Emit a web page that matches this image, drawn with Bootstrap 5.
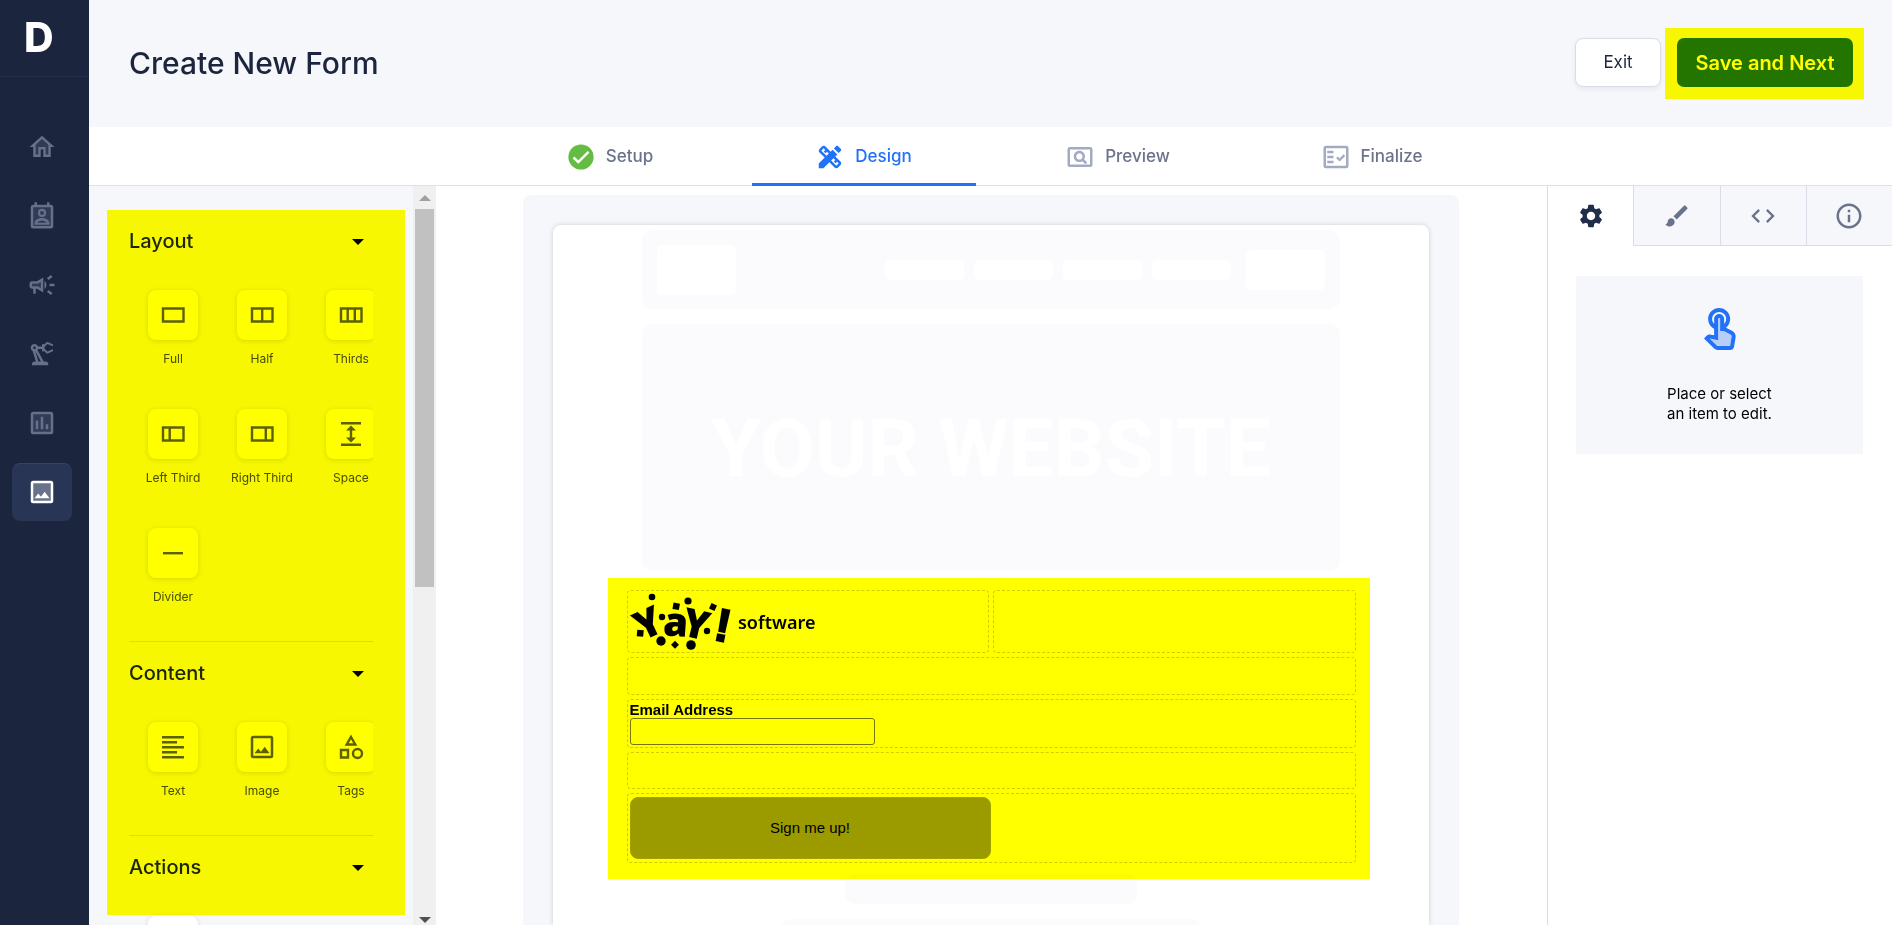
<!DOCTYPE html>
<html lang="en">
<head>
<meta charset="utf-8">
<meta name="viewport" content="width=device-width, initial-scale=1">
<title>Create New Form</title>
<link href="https://cdn.jsdelivr.net/npm/bootstrap@5.3.0/dist/css/bootstrap.min.css" rel="stylesheet">
<style>
:root{--ink:#1b253d;--mist:#f6f7fb;--line:#dcdce9;--slate:#6b738b;--blue:#2172f6}
body{font-family:Inter,"Liberation Sans",sans-serif;color:var(--ink);background:#fff}
svg{display:block;flex:none;fill:currentColor}
.ic{width:30px;height:30px}
.ic-s{width:28px;height:28px}
.ic-l{width:48px;height:48px}
/* dark rail */
.rail{width:89px;background:var(--ink)}
.brand{height:77px;border-bottom:1px solid #242f4b;color:#fff;font:800 41px/74px Inter,sans-serif;padding-left:24px;text-decoration:none}
.rail-nav{padding:41px 17px 0 12px;gap:11px}
.rail-link{height:58px;border-radius:8px;color:#66708a;border:1px solid transparent}
.rail-link.on{background:#283555;border-top-color:#36425f;color:#fff}
/* top */
.top{height:127px;background:var(--mist);padding:0 39px 2px 40px}
.top h1{font-size:30px;line-height:36px;font-weight:500}
.btn-exit{width:86px;height:49px;background:#fff;border:1px solid var(--line);border-radius:8px;font-size:17px;color:var(--ink);box-shadow:0 2px 5px #1b253d14}
.btn-save{width:176px;height:49px;border-radius:7px;background:#237525;color:#fff;font-size:20px;font-weight:600;padding:0}
.marker{position:absolute;background:#ff0;mix-blend-mode:multiply;pointer-events:none}
.marker-save{inset:-10px -11px -12px -12px}
.marker-tools{inset:24px 8px 10px 18px}
.marker-form{inset:-12px -14px -16px -19px}
/* steps */
.steps{height:59px;gap:30px;border-bottom:1px solid #dbe1ea}
.step{width:224px;height:59px;gap:10px;font-size:17px;font-weight:500;color:var(--slate);text-decoration:none;border-bottom:3px solid transparent;padding-top:3px}
.step svg{color:#a3abc3}
.step.on,.step.on svg{color:var(--blue)}
.step.on{border-color:var(--blue)}
/* left tools */
.tools{width:324px;background:var(--mist)}
.tools-in{padding:39px 40px 0 40px}
.sect + .sect{border-top:1px solid #dcdfe3;margin-top:14px;padding-top:15px}
.sect-head{height:30px;margin-bottom:15px;padding:1px 9px 0 0;border:0;background:none;font-size:20px;font-weight:500;color:var(--ink)}
.caret{border:6px solid transparent;border-top-color:#000;border-bottom:0;margin-top:2px}
.tiles{display:grid;grid-template-columns:repeat(3,89px);overflow:hidden}
.tile{height:119px;padding:20px 1px 0 0;border:0;background:none;font-size:12px;line-height:16px;color:#484e60}
.tile-box{width:50px;height:50px;border-radius:8px;background:#fff;margin-bottom:11px;box-shadow:0 1px 5px #1b253d24;color:#5c6178}
.bar{width:23px;background:#f0f0f0;padding:9px 2px 2px}
.thumb{height:378px;width:19px;background:#c1c1c1;margin-top:8px}
.up,.dn{border:6px solid transparent;width:12px}
.up{border-bottom-color:#a0a0a0;border-top:0}
.dn{border-top-color:#505050;border-bottom:0}
/* canvas */
.board{padding-right:1px}
.stage{width:936px;max-width:100%;margin-top:9px;padding:30px 30px 0;background:var(--mist);border-radius:8px 8px 0 0}
.sheet{background:#fff;border-radius:8px 8px 0 0;padding-top:5px;box-shadow:0 0 5px #1b253d30}
.ghost{background:#fbfbfd;border-radius:10px}
.ghost-w{width:698px}
.ghost i{background:#fff;border-radius:5px;width:79px}
.hero{height:247px;font:700 80px/90px Roboto,sans-serif;color:#fff;padding-top:2px;white-space:nowrap}
.form-zone{width:729px;margin-top:19px;gap:4px;font-family:"Liberation Sans",Arial,sans-serif;font-size:15px;color:#000}
.cell{border:1px dashed #cfcfcf;border-radius:4px;padding:2px}
.cell label{font-weight:700;line-height:16px}
.mail{width:245px;height:27px;border:1px solid #767676;border-radius:3px;padding:2px 6px}
.btn-go{width:361px;height:62px;margin:1px 0;background:#9b9b9b;border:1px solid #a3a31f;border-radius:8px;color:#000}
.logo{overflow:visible}
/* right */
.props{width:345px;border-left:1px solid var(--line)}
.ptab{flex:1 1 0;height:60px;border:0;border-left:1px solid var(--line);border-bottom:1px solid var(--line);background:var(--mist);color:var(--slate);padding:0}
.ptab.on{background:#fff;border-left:0;border-color:transparent;color:#202c49}
.hint{margin:30px 29px 0 28px;height:178px;background:var(--mist);padding-top:30px;color:#000;font-size:15px;line-height:20px}
</style>
</head>
<body>
<svg width="0" height="0" class="position-absolute" aria-hidden="true">
<symbol id="home" viewBox="0 0 24 24"><path opacity=".3" d="M7 10.190V18h2v-6h6v6h2v-7.810l-5-4.500z"/><path d="M12 3L2 12h3v8h6v-6h2v6h6v-8h3L12 3zm5 15h-2v-6H9v6H7v-7.810l5-4.500 5 4.500V18z"/></symbol>
<symbol id="contact" viewBox="0 0 24 24"><rect x="4" y="4" width="16" height="17" rx="1" fill-opacity=".3" stroke="currentColor" stroke-width="2"/><path d="M6 1h2v3H6zM16 1h2v3h-2z"/><circle cx="12" cy="9.500" r="2.400" fill="none" stroke="currentColor" stroke-width="1.700"/><path fill-rule="evenodd" d="M6 17.500V19h12v-1.500c0-2.500-3.500-4-6-4s-6 1.500-6 4zm2.300-.1c.6-1 2.400-1.800 3.700-1.800s3.100.8 3.700 1.800z"/></symbol>
<symbol id="horn" viewBox="0 0 24 24"><path opacity=".3" d="M9.030 10.710L11 9.530v4.940l-2.450-1.470H4v-2h4.550z"/><path d="M18 11v2h4v-2h-4zM16 17.610c.96.71 2.210 1.650 3.200 2.390.4-.53.8-1.070 1.200-1.600-.99-.74-2.240-1.680-3.200-2.400-.4.54-.8 1.080-1.200 1.610zM20.400 5.600c-.4-.53-.8-1.070-1.200-1.600-.99.74-2.240 1.680-3.200 2.400.4.53.8 1.070 1.200 1.600.96-.72 2.210-1.650 3.200-2.400zM4 9c-1.100 0-2 .9-2 2v2c0 1.100.9 2 2 2h1v4h2v-4h1l5 3V6L8 9H4zm5.030 1.710L11 9.530v4.940l-1.970-1.180-.48-.29H4v-2h4.550l.48-.29zM15.500 12c0-1.330-.58-2.530-1.500-3.350v6.690c.92-.81 1.500-2.010 1.500-3.340z"/></symbol>
<symbol id="arm" viewBox="0 0 24 24"><path d="M19.930 8.350l-3.600 1.680L14 7.700V6.300l2.330-2.330 3.600 1.680c.38.18.82.01 1-.36.18-.38.01-.82-.36-1l-3.920-1.830c-.38-.18-.83-.1-1.130.2L13.780 4.400c-.18-.24-.46-.4-.78-.4-.55 0-1 .45-1 1v1H8.820C8.400 4.840 7.300 4 6 4 4.340 4 3 5.340 3 7c0 1.100.6 2.050 1.480 2.580L7.080 18H6c-1.100 0-2 .9-2 2v1h13v-1c0-1.100-.9-2-2-2h-1.620L8.410 8.770c.17-.24.31-.49.41-.77H12v1c0 .55.45 1 1 1 .32 0 .6-.16.78-.4l1.740 1.740c.3.3.75.38 1.130.2l3.920-1.830c.38-.18.54-.62.36-1-.18-.37-.62-.54-1-.36zM6 8c-.55 0-1-.45-1-1s.45-1 1-1 1 .45 1 1-.45 1-1 1zm5.110 10H9.170l-2.460-8h.1l4.300 8z"/></symbol>
<symbol id="chart" viewBox="0 0 24 24"><rect x="4" y="4" width="16" height="16" rx="1" fill-opacity=".3" stroke="currentColor" stroke-width="2"/><path d="M7 10h2v7H7zM11 7h2v10h-2zM15 13h2v4h-2z"/></symbol>
<symbol id="pic2" viewBox="0 0 24 24"><rect x="4" y="4" width="16" height="16" rx="1" fill-opacity=".3" stroke="currentColor" stroke-width="2"/><path d="M14.140 11.860l-3 3.870L9 13.140 6 17h12z"/></symbol>
<symbol id="pic" viewBox="0 0 24 24"><rect x="4" y="4" width="16" height="16" rx="1" fill="none" stroke="currentColor" stroke-width="2"/><path d="M14.140 11.860l-3 3.870L9 13.140 6 17h12z"/></symbol>
<symbol id="ok" viewBox="0 0 30 30"><circle cx="15" cy="15" r="12.600" fill="#64bc42"/><path d="M7.500 15.500l4.800 4.500L22.500 9.800" fill="none" stroke="#fff" stroke-width="2.400"/></symbol>
<symbol id="design" viewBox="0 0 24 24"><path d="M16.240 11.510l1.570-1.570-3.750-3.750-1.570 1.570L8.350 3.630c-.78-.78-2.050-.78-2.830 0l-1.900 1.900c-.78.78-.78 2.050 0 2.830l4.130 4.130L3 17.250V21h3.750l4.760-4.760 4.130 4.130c.95.95 2.230.6 2.830 0l1.900-1.900c.78-.78.78-2.050 0-2.830l-4.130-4.130zM9.180 11.070L5.040 6.940l1.890-1.900 1.270 1.270L7.020 7.500l1.410 1.410 1.190-1.190 1.450 1.450-1.890 1.900zm7.880 7.890l-4.130-4.130 1.900-1.900 1.450 1.450-1.190 1.190 1.410 1.410 1.190-1.190 1.270 1.270-1.900 1.900zM20.710 7.040c.39-.39.39-1.020 0-1.410l-2.340-2.340c-.47-.47-1.120-.29-1.410 0l-1.830 1.830 3.750 3.750 1.830-1.830z"/></symbol>
<symbol id="preview" viewBox="0 0 24 24"><path d="M11.490 16c.88 0 1.700-.26 2.390-.7l2.440 2.440 1.420-1.420-2.440-2.430c.44-.7.7-1.510.7-2.390C16 9.010 13.990 7 11.500 7S7 9.010 7 11.500 9.010 16 11.490 16zm.01-7c1.380 0 2.500 1.120 2.500 2.500S12.880 14 11.500 14 9 12.880 9 11.500 10.120 9 11.500 9z"/><rect x="3" y="5" width="18" height="14" rx="1" fill="none" stroke="currentColor" stroke-width="2"/></symbol>
<symbol id="final" viewBox="0 0 24 24"><rect x="3" y="4" width="18" height="16" rx="1" fill="none" stroke="currentColor" stroke-width="2"/><path d="M5 7h5v2H5zM5 11h5v2H5zM5 15h5v2H5z"/><path d="M12.700 12.200l2.200 2.200 3.800-3.900" fill="none" stroke="currentColor" stroke-width="1.800"/></symbol>
<symbol id="gear" viewBox="0 0 24 24"><path d="M19.140 12.940c.04-.3.06-.61.06-.94 0-.32-.02-.64-.07-.94l2.030-1.580c.18-.14.23-.41.12-.61l-1.920-3.320c-.12-.22-.37-.29-.59-.22l-2.390.96c-.5-.38-1.030-.7-1.620-.94l-.36-2.540c-.04-.24-.24-.41-.48-.41h-3.840c-.24 0-.43.17-.47.41l-.36 2.540c-.59.24-1.130.57-1.620.94l-2.390-.96c-.22-.08-.47 0-.59.22L2.740 8.870c-.12.21-.08.47.12.61l2.030 1.580c-.05.3-.09.63-.09.94s.02.64.07.94l-2.030 1.580c-.18.14-.23.41-.12.61l1.920 3.320c.12.22.37.29.59.22l2.390-.96c.5.38 1.030.7 1.620.94l.36 2.540c.05.24.24.41.48.41h3.840c.24 0 .44-.17.47-.41l.36-2.540c.59-.24 1.130-.56 1.620-.94l2.390.96c.22.08.47 0 .59-.22l1.920-3.320c.12-.22.07-.47-.12-.61l-2.010-1.580zM12 15.600c-1.980 0-3.600-1.620-3.600-3.600s1.620-3.600 3.600-3.600 3.600 1.620 3.600 3.600-1.620 3.600-3.600 3.600z"/></symbol>
<symbol id="brush" viewBox="0 0 24 24"><path d="M7 14c-1.660 0-3 1.340-3 3 0 1.310-1.160 2-2 2 .92 1.220 2.490 2 4 2 2.210 0 4-1.790 4-4 0-1.660-1.340-3-3-3zm13.710-9.370l-1.340-1.340c-.39-.39-1.020-.39-1.410 0L9 12.250 11.750 15l8.960-8.960c.39-.39.39-1.020 0-1.410z"/></symbol>
<symbol id="code" viewBox="0 0 24 24"><path d="M9.400 16.600L4.800 12l4.600-4.600L8 6l-6 6 6 6 1.400-1.400zm5.200 0l4.600-4.600-4.600-4.600L16 6l6 6-6 6-1.400-1.400z"/></symbol>
<symbol id="info" viewBox="0 0 24 24"><path d="M11 7h2v2h-2zm0 4h2v6h-2zm1-9C6.480 2 2 6.480 2 12s4.480 10 10 10 10-4.480 10-10S17.520 2 12 2zm0 18c-4.410 0-8-3.590-8-8s3.590-8 8-8 8 3.590 8 8-3.590 8-8 8z"/></symbol>
<symbol id="touch" viewBox="0 0 24 24"><path opacity=".3" d="M17.840 15.290L17.040 20h-6.300c-.09 0-.17-.04-.24-.1l-3.680-3.680 4.250.89V6.500c0-.28.22-.5.5-.5s.5.22.5.5v6h1.760l3.460 1.730c.4.2.62.63.55 1.060z"/><path fill-rule="evenodd" d="M18.190 12.440l-3.240-1.620c1.290-1 2.120-2.560 2.120-4.320 0-3.030-2.470-5.500-5.500-5.500s-5.500 2.470-5.500 5.500c0 2.130 1.220 3.980 3 4.890v3.260c-2.150-.46-2.020-.44-2.260-.44-.53 0-1.030.21-1.410.59L4 16.220l5.090 5.090c.43.44 1.030.69 1.650.69h6.300c.98 0 1.810-.7 1.970-1.670l.8-4.710c.22-1.300-.43-2.580-1.620-3.180zM17.840 15.290L17.040 20h-6.300c-.09 0-.17-.04-.24-.1l-3.680-3.680 4.250.89V6.500c0-.28.22-.5.5-.5s.5.22.5.5v6h1.760l3.460 1.730c.4.2.62.63.55 1.060zM8.070 6.500c0-1.930 1.570-3.500 3.500-3.500s3.500 1.570 3.500 3.500c0 .95-.38 1.810-1 2.440V6.500c0-1.380-1.120-2.500-2.500-2.500s-2.500 1.120-2.500 2.500v2.440c-.62-.63-1-1.490-1-2.440z"/></symbol>
<symbol id="full" viewBox="0 0 28 28"><path d="M4 7.500h20.500v13H4z" fill="none" stroke="currentColor" stroke-width="2.400"/></symbol>
<symbol id="half" viewBox="0 0 28 28"><path d="M4 7.500h20.500v13H4zM14.200 7.500v13" fill="none" stroke="currentColor" stroke-width="2.400"/></symbol>
<symbol id="thirds" viewBox="0 0 28 28"><path d="M4 7.500h20.500v13H4zM10.700 7.500v13M17.800 7.500v13" fill="none" stroke="currentColor" stroke-width="2.400"/></symbol>
<symbol id="lthird" viewBox="0 0 28 28"><path d="M4 7.500h20.500v13H4zM10.700 7.500v13" fill="none" stroke="currentColor" stroke-width="2.400"/></symbol>
<symbol id="rthird" viewBox="0 0 28 28"><path d="M4 7.500h20.500v13H4zM17.800 7.500v13" fill="none" stroke="currentColor" stroke-width="2.400"/></symbol>
<symbol id="space" viewBox="0 0 28 28"><path d="M4 2h20v2.400H4zM4 23.600h20V26H4zM14 5.500l5 5h-3.800v7H19l-5 5-5-5h3.800v-7H9z"/></symbol>
<symbol id="rule" viewBox="0 0 28 28"><path d="M4 13h20v2.400H4z"/></symbol>
<symbol id="text" viewBox="0 0 28 28"><path d="M3 3h22v2.400H3zM3 8h15v2.400H3zM3 13h22v2.400H3zM3 18h15v2.400H3zM3 23h22v2.400H3z"/></symbol>
<symbol id="tags" viewBox="0 0 28 28"><path d="M14 4l4.300 7.500H9.700zM4 17h7v7.500H4z" fill="none" stroke="currentColor" stroke-width="2.400"/><circle cx="20.500" cy="20.500" r="4.500" fill="none" stroke="currentColor" stroke-width="2.400"/></symbol>
</svg>

<div class="d-flex vh-100 overflow-hidden">
  <aside class="rail d-flex flex-column flex-shrink-0">
    <a href="#" class="brand">D</a>
    <nav class="rail-nav d-flex flex-column" aria-label="Main">
      <a href="#" class="rail-link d-flex align-items-center justify-content-center" aria-label="Home"><svg class="ic"><use href="#home"/></svg></a>
      <a href="#" class="rail-link d-flex align-items-center justify-content-center" aria-label="Contacts"><svg class="ic"><use href="#contact"/></svg></a>
      <a href="#" class="rail-link d-flex align-items-center justify-content-center" aria-label="Campaigns"><svg class="ic"><use href="#horn"/></svg></a>
      <a href="#" class="rail-link d-flex align-items-center justify-content-center" aria-label="Automation"><svg class="ic"><use href="#arm"/></svg></a>
      <a href="#" class="rail-link d-flex align-items-center justify-content-center" aria-label="Reports"><svg class="ic"><use href="#chart"/></svg></a>
      <a href="#" class="rail-link on d-flex align-items-center justify-content-center" aria-label="Content"><svg class="ic"><use href="#pic2"/></svg></a>
    </nav>
  </aside>

  <div class="d-flex flex-column flex-grow-1 overflow-hidden">
    <header class="top d-flex align-items-center flex-shrink-0">
      <h1 class="m-0 me-auto">Create New Form</h1>
      <button type="button" class="btn btn-exit me-3">Exit</button>
      <div class="position-relative">
        <button type="button" class="btn btn-save d-block">Save and Next</button>
        <span class="marker marker-save"></span>
      </div>
    </header>

    <nav class="steps d-flex justify-content-center flex-shrink-0" aria-label="Steps">
      <a href="#" class="step d-flex align-items-center justify-content-center"><svg class="ic"><use href="#ok"/></svg>Setup</a>
      <a href="#" class="step on d-flex align-items-center justify-content-center"><svg class="ic"><use href="#design"/></svg>Design</a>
      <a href="#" class="step d-flex align-items-center justify-content-center"><svg class="ic"><use href="#preview"/></svg>Preview</a>
      <a href="#" class="step d-flex align-items-center justify-content-center"><svg class="ic"><use href="#final"/></svg>Finalize</a>
    </nav>

    <div class="d-flex flex-grow-1 overflow-hidden">
      <div class="tools position-relative flex-shrink-0 overflow-hidden">
        <div class="tools-in">
          <section class="sect">
            <button type="button" class="sect-head d-flex w-100 align-items-center justify-content-between">Layout<span class="caret"></span></button>
            <div class="tiles">
              <button type="button" class="tile d-flex flex-column align-items-center"><span class="tile-box d-flex align-items-center justify-content-center"><svg class="ic-s"><use href="#full"/></svg></span>Full</button>
              <button type="button" class="tile d-flex flex-column align-items-center"><span class="tile-box d-flex align-items-center justify-content-center"><svg class="ic-s"><use href="#half"/></svg></span>Half</button>
              <button type="button" class="tile d-flex flex-column align-items-center"><span class="tile-box d-flex align-items-center justify-content-center"><svg class="ic-s"><use href="#thirds"/></svg></span>Thirds</button>
              <button type="button" class="tile d-flex flex-column align-items-center"><span class="tile-box d-flex align-items-center justify-content-center"><svg class="ic-s"><use href="#lthird"/></svg></span>Left Third</button>
              <button type="button" class="tile d-flex flex-column align-items-center"><span class="tile-box d-flex align-items-center justify-content-center"><svg class="ic-s"><use href="#rthird"/></svg></span>Right Third</button>
              <button type="button" class="tile d-flex flex-column align-items-center"><span class="tile-box d-flex align-items-center justify-content-center"><svg class="ic-s"><use href="#space"/></svg></span>Space</button>
              <button type="button" class="tile d-flex flex-column align-items-center"><span class="tile-box d-flex align-items-center justify-content-center"><svg class="ic-s"><use href="#rule"/></svg></span>Divider</button>
            </div>
          </section>
          <section class="sect">
            <button type="button" class="sect-head d-flex w-100 align-items-center justify-content-between">Content<span class="caret"></span></button>
            <div class="tiles">
              <button type="button" class="tile d-flex flex-column align-items-center"><span class="tile-box d-flex align-items-center justify-content-center"><svg class="ic-s"><use href="#text"/></svg></span>Text</button>
              <button type="button" class="tile d-flex flex-column align-items-center"><span class="tile-box d-flex align-items-center justify-content-center"><svg class="ic"><use href="#pic"/></svg></span>Image</button>
              <button type="button" class="tile d-flex flex-column align-items-center"><span class="tile-box d-flex align-items-center justify-content-center"><svg class="ic-s"><use href="#tags"/></svg></span>Tags</button>
            </div>
          </section>
          <section class="sect">
            <button type="button" class="sect-head d-flex w-100 align-items-center justify-content-between">Actions<span class="caret"></span></button>
            <div class="tiles">
              <button type="button" class="tile d-flex flex-column align-items-center" aria-label="Button"><span class="tile-box"></span></button>
            </div>
          </section>
        </div>
        <span class="marker marker-tools"></span>
      </div>
      <div class="bar d-flex flex-column align-items-center flex-shrink-0" aria-hidden="true">
        <span class="up"></span><span class="thumb"></span><span class="dn mt-auto"></span>
      </div>

      <main class="board flex-grow-1 d-flex justify-content-center overflow-hidden">
        <div class="stage">
          <div class="sheet d-flex flex-column align-items-center h-100">
            <div class="ghost ghost-w d-flex align-items-center flex-shrink-0" style="height:79px;padding:0 15px;gap:10px">
              <i class="me-auto" style="height:50px"></i><i style="height:20px"></i><i style="height:20px"></i><i style="height:20px"></i><i style="height:20px"></i><i style="height:40px;margin-left:5px"></i>
            </div>
            <div class="ghost ghost-w hero d-flex align-items-center justify-content-center flex-shrink-0" style="margin-top:15px">YOUR WEBSITE</div>
            <form class="form-zone position-relative d-flex flex-column flex-shrink-0">
              <div class="d-flex gap-1">
                <div class="cell" style="flex:1 1 0">
                  <svg class="logo" width="200" height="57" viewBox="0 0 200 57" role="img" aria-label="Yay! software">
                    <g font-family="Noto Sans" font-weight="900" font-size="40" text-anchor="middle">
                      <text transform="translate(24 43) rotate(-25)">Y</text>
                      <text transform="translate(45 43) rotate(4)">a</text>
                      <text transform="translate(63 45) rotate(13)">Y</text>
                    </g>
                    <text transform="translate(90 48) rotate(11)" font-family="Liberation Sans" font-weight="700" font-size="46" text-anchor="middle" stroke="currentColor" stroke-width="2">!</text>
                    <circle cx="22" cy="4" r="3.300"/><circle cx="58" cy="8" r="3.600"/><circle cx="32" cy="24" r="3.200"/><circle cx="31" cy="48" r="4.700"/><circle cx="61" cy="52" r="4.800"/><circle cx="77" cy="38" r="3.200"/>
                    <rect x="43" y="10" width="6.500" height="6.500" transform="rotate(10 46 13)"/><rect x="80" y="11" width="6" height="6" transform="rotate(25 83 14)"/><rect x="7" y="37" width="6.500" height="6.500" transform="rotate(5 10 40)"/><rect x="42" y="49" width="5.600" height="5.600" transform="rotate(45 45 52)"/>
                    <text x="108" y="36" font-family="Noto Sans" font-weight="600" font-size="18">software</text>
                  </svg>
                </div>
                <div class="cell" style="flex:1 1 0"></div>
              </div>
              <div class="cell" style="height:38px"></div>
              <div class="cell d-flex flex-column"><label for="mail">Email Address</label><input id="mail" type="email" class="mail"></div>
              <div class="cell" style="height:37px"></div>
              <div class="cell"><button type="button" class="btn-go d-block">Sign me up!</button></div>
              <span class="marker marker-form"></span>
            </form>
            <div class="ghost flex-shrink-0" style="width:292px;height:30px;margin-top:11px"></div>
            <div class="ghost flex-shrink-0" style="width:421px;height:30px;margin-top:15px"></div>
          </div>
        </div>
      </main>

      <aside class="props flex-shrink-0">
        <div class="d-flex">
          <button type="button" class="ptab on d-flex align-items-center justify-content-center" aria-label="Settings"><svg class="ic-s"><use href="#gear"/></svg></button>
          <button type="button" class="ptab d-flex align-items-center justify-content-center" aria-label="Style"><svg class="ic-s"><use href="#brush"/></svg></button>
          <button type="button" class="ptab d-flex align-items-center justify-content-center" aria-label="Code"><svg class="ic-s"><use href="#code"/></svg></button>
          <button type="button" class="ptab d-flex align-items-center justify-content-center" aria-label="Info"><svg class="ic"><use href="#info"/></svg></button>
        </div>
        <div class="hint d-flex flex-column align-items-center">
          <svg class="ic-l" style="color:var(--blue)"><use href="#touch"/></svg>
          <p class="m-0" style="padding-top:30px">Place or select<br>an item to edit.</p>
        </div>
      </aside>
    </div>
  </div>
</div>
<script src="https://cdn.jsdelivr.net/npm/bootstrap@5.3.0/dist/js/bootstrap.bundle.min.js"></script>
</body>
</html>
